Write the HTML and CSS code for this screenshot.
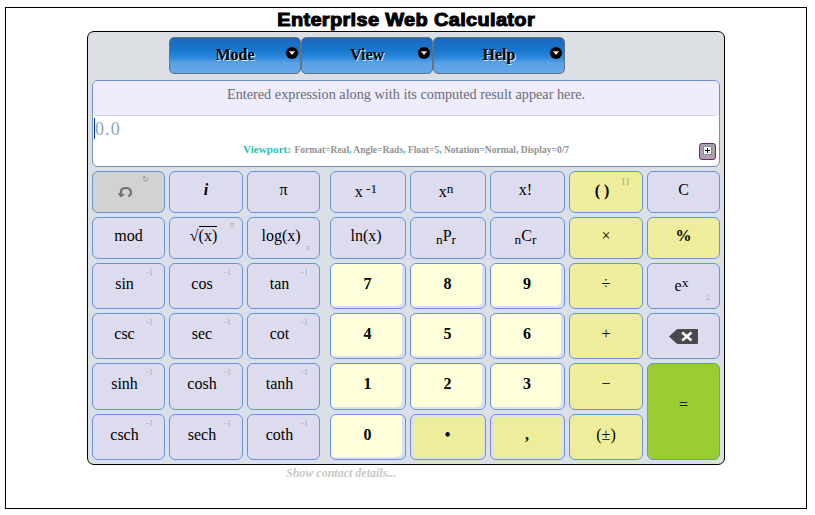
FILE: index.html
```
<!DOCTYPE html>
<html lang="en">
<head>
<meta charset="utf-8">
<title>Enterprise Web Calculator</title>
<link rel="stylesheet" href="styles.css">
</head>
<body>
<div class="page">
  <h1><span>Enterprise Web Calculator</span></h1>
  <main class="calc">
    <nav class="menu">
      <button>Mode<svg class="arrow" viewBox="0 0 12 12"><circle cx="6" cy="6" r="6"/><path d="M2.8 4.2h6.4L6 8z"/></svg></button>
      <button>View<svg class="arrow" viewBox="0 0 12 12"><circle cx="6" cy="6" r="6"/><path d="M2.8 4.2h6.4L6 8z"/></svg></button>
      <button>Help<svg class="arrow" viewBox="0 0 12 12"><circle cx="6" cy="6" r="6"/><path d="M2.8 4.2h6.4L6 8z"/></svg></button>
    </nav>
    <section class="display">
      <div class="history">Entered expression along with its computed result appear here.</div>
      <div class="entry">0.0</div>
      <div class="viewport"><b>Viewport:</b> <span>Format=Real<i>,</i> Angle=Rads<i>,</i> Float=5<i>,</i> Notation=Normal<i>,</i> Display=0/7</span></div>
      <button class="expand"><svg viewBox="0 0 17 17"><rect x="4.500" y="3.500" width="8" height="8" fill="#fff" stroke="#7996a5"/><path d="M6 7.500h5M8.500 5v5" stroke="#000" fill="none"/></svg></button>
    </section>
    <section class="keys">
      <div class="functions">
        <button class="undo"><svg class="undo-icon" viewBox="0 0 16 12"><path d="M4 8V6Q4 2 8.500 2Q14 2 14 6.500Q14 9.500 11.200 10" fill="none" stroke="#707070" stroke-width="2.200"/><path d="M.5 6.800L8 8.500L3.500 11.500z" fill="#707070"/></svg><small>↻</small></button>
        <button><b><em>i</em></b></button>
        <button>π</button>
        <button>mod</button>
        <button class="shifted root"><span>√<span class="over">(x)</span></span><small>n</small></button>
        <button class="shifted log">log(x)<small class="low">n</small></button>
        <button class="shifted">sin<small>-1</small></button>
        <button class="shifted">cos<small>-1</small></button>
        <button class="shifted">tan<small>-1</small></button>
        <button class="shifted">csc<small>-1</small></button>
        <button class="shifted">sec<small>-1</small></button>
        <button class="shifted">cot<small>-1</small></button>
        <button class="shifted">sinh<small>-1</small></button>
        <button class="shifted">cosh<small>-1</small></button>
        <button class="shifted">tanh<small>-1</small></button>
        <button class="shifted">csch<small>-1</small></button>
        <button class="shifted">sech<small>-1</small></button>
        <button class="shifted">coth<small>-1</small></button>
      </div>
      <div class="numbers">
        <button class="power"><span>x<sup> -1</sup></span></button>
        <button class="power"><span>x<sup>n</sup></span></button>
        <button class="near">x!</button>
        <button class="op parens shifted"><b>( )</b><small>[&#8202;]</small></button>
        <button>C</button>
        <button class="near">ln(x)</button>
        <button class="near"><span><sub>n</sub>P<sub>r</sub></span></button>
        <button class="near"><span><sub>n</sub>C<sub>r</sub></span></button>
        <button class="op">×</button>
        <button class="op"><b>%</b></button>
        <button class="num">7</button>
        <button class="num">8</button>
        <button class="num">9</button>
        <button class="op">÷</button>
        <button class="power"><span>e<sup>x</sup></span><small class="low">2</small></button>
        <button class="num">4</button>
        <button class="num">5</button>
        <button class="num">6</button>
        <button class="op">+</button>
        <button class="back"><svg viewBox="0 0 29 15"><path d="M0 7.500L7 1Q8 0 9 0H28Q29 0 29 1V14Q29 15 28 15H9Q8 15 7 14z" fill="#4a4a4e"/><path d="M13.200 3.500L22.500 11.500M22.500 3.500L13.200 11.500" stroke="#fff" stroke-width="2.500"/></svg></button>
        <button class="num">1</button>
        <button class="num">2</button>
        <button class="num">3</button>
        <button class="op">−</button>
        <button class="equals">=</button>
        <button class="num">0</button>
        <button class="num mark">•</button>
        <button class="num mark comma">,</button>
        <button class="op sign">(±)</button>
      </div>
    </section>
  </main>
  <footer>Show contact details...</footer>
</div>
</body>
</html>
```
FILE: styles.css
```
* { box-sizing: border-box; }
body { margin: 0; background: #fff; font-family: "Liberation Serif", serif; font-size: 16px; }
button { font: inherit; color: #000; margin: 0; padding: 0; position: relative; }
.page { width: 802px; height: 502px; margin: 7px 0 0 5px; border: 1px solid #000; }
h1 { margin: 0 0 0 81px; width: 638px; height: 23px; text-align: center; font: bold 18px/25px "Liberation Sans", sans-serif; }
h1 span { display: inline-block; -webkit-text-stroke: 1px #000; letter-spacing: .3px; transform: scaleX(1.11); white-space: nowrap; }
.calc { width: 638px; height: 434px; margin-left: 81px; padding: 5px 4px; border: 1px solid #000; border-radius: 7px; background: #dce0e5; }
.menu { display: flex; margin-left: 77px; }
.menu button { width: 132px; height: 37px; border: 1px solid #64717f; border-radius: 5px; background: linear-gradient(#1b68bd 0%, #1674cb 30%, #2583d8 52%, #5ba1e6 72%, #61a7ec 100%); font-weight: bold; text-shadow: 1px 1px 0 #d8ecfc; padding-bottom: 2px; }
.arrow { position: absolute; right: 2px; top: 9px; width: 12px; height: 12px; }
.arrow path { fill: #f0e8dc; }
.display { position: relative; height: 87px; margin-top: 6px; border: 1px solid #6c8fd0; border-radius: 6px; background: #fff; overflow: hidden; }
.history { height: 35px; padding-top: 5px; border-bottom: 1px solid #d2d4e2; border-radius: 5px; background: #eeecfd; color: #6b6b76; text-align: center; font-size: 14.250px; line-height: 17px; }
.entry { height: 21px; margin: 2px 0 0 1px; border-left: 1px solid #0a3a91; color: #86a6c6; font-size: 18px; line-height: 22px; letter-spacing: 1.100px; }
.viewport { height: 15px; margin-top: 3px; padding-left: 150px; color: #929292; font-size: 9.520px; line-height: 15px; font-weight: bold; white-space: nowrap; }
.viewport b { color: #1fc2bd; font-size: 11.200px; margin-right: 1px; }
.viewport i { color: #20bdc0; font-style: normal; }
.expand { position: absolute; right: 3px; top: 62px; width: 17px; height: 17px; border: 1px solid #722b67; border-radius: 3px; background: #aaa1ad; }
.expand svg { display: block; width: 17px; height: 17px; margin: -1px; }
.keys { display: flex; gap: 10px; margin-top: 4px; }
.functions, .numbers { display: grid; gap: 4px; grid-template-rows: 42px 42px 46px 46px 47px 46px; }
.functions { grid-template-columns: 73px 74px 73px; }
.numbers { grid-template-columns: 76px 76px 75px 74px 73px; }
.keys button { display: flex; align-items: center; justify-content: center; line-height: 18px; padding-bottom: 5px; border: 1px solid #6d94d0; border-radius: 6px; background: #dddcef; box-shadow: 0 0 2px 1px #d2e0f6; }
.keys .shifted { padding-right: 8px; }
.keys .log, .keys .root { padding-right: 5px; }
.keys .near { padding-right: 4px; }
.keys .power { padding: 0 4px 1px 0; }
.keys .undo { background: #d2d2d2; }
.keys .op { background: #eded9b; }
.keys .num { border-color: #738edb; background: #ffffdc; font-weight: bold; box-shadow: inset -3px -2px 0 #d8e0f4, 0 0 2px 1px #d2e0f6; padding-right: 1px; }
.keys .mark { background: #eded9b; box-shadow: inset 2px 2px 0 #dce0e8, inset -2px -2px 0 #dce0e8; }
.keys .equals { grid-column: 5; grid-row: 5 / 7; background: #9acd32; padding-bottom: 13px; }
small { position: absolute; top: 4px; right: 11px; color: #a9a8b7; font-size: 8px; line-height: 10px; }
small.low { top: auto; right: 9px; bottom: 5px; }
.root small { top: 2px; right: 8px; }
.keys .parens { padding-bottom: 3px; }
.parens small { color: #98986a; top: 4px; right: 13px; font-size: 9px; }
.undo small { top: 3px; right: 15px; color: #929292; font-family: "DejaVu Sans", sans-serif; }
.undo-icon { width: 16px; height: 12px; margin: 5px 8px 0 0; }
.over { border-top: 1px solid #000; }
sup, sub { font-size: 13.300px; line-height: 0; }
sup { vertical-align: 4.500px; }
sub { vertical-align: -3px; }
.back svg { width: 29px; height: 15px; margin-top: 6px; }
footer { margin: 0 0 0 280px; color: #c8c8c8; font: italic bold 12px/16px "Liberation Serif", serif; }
```
